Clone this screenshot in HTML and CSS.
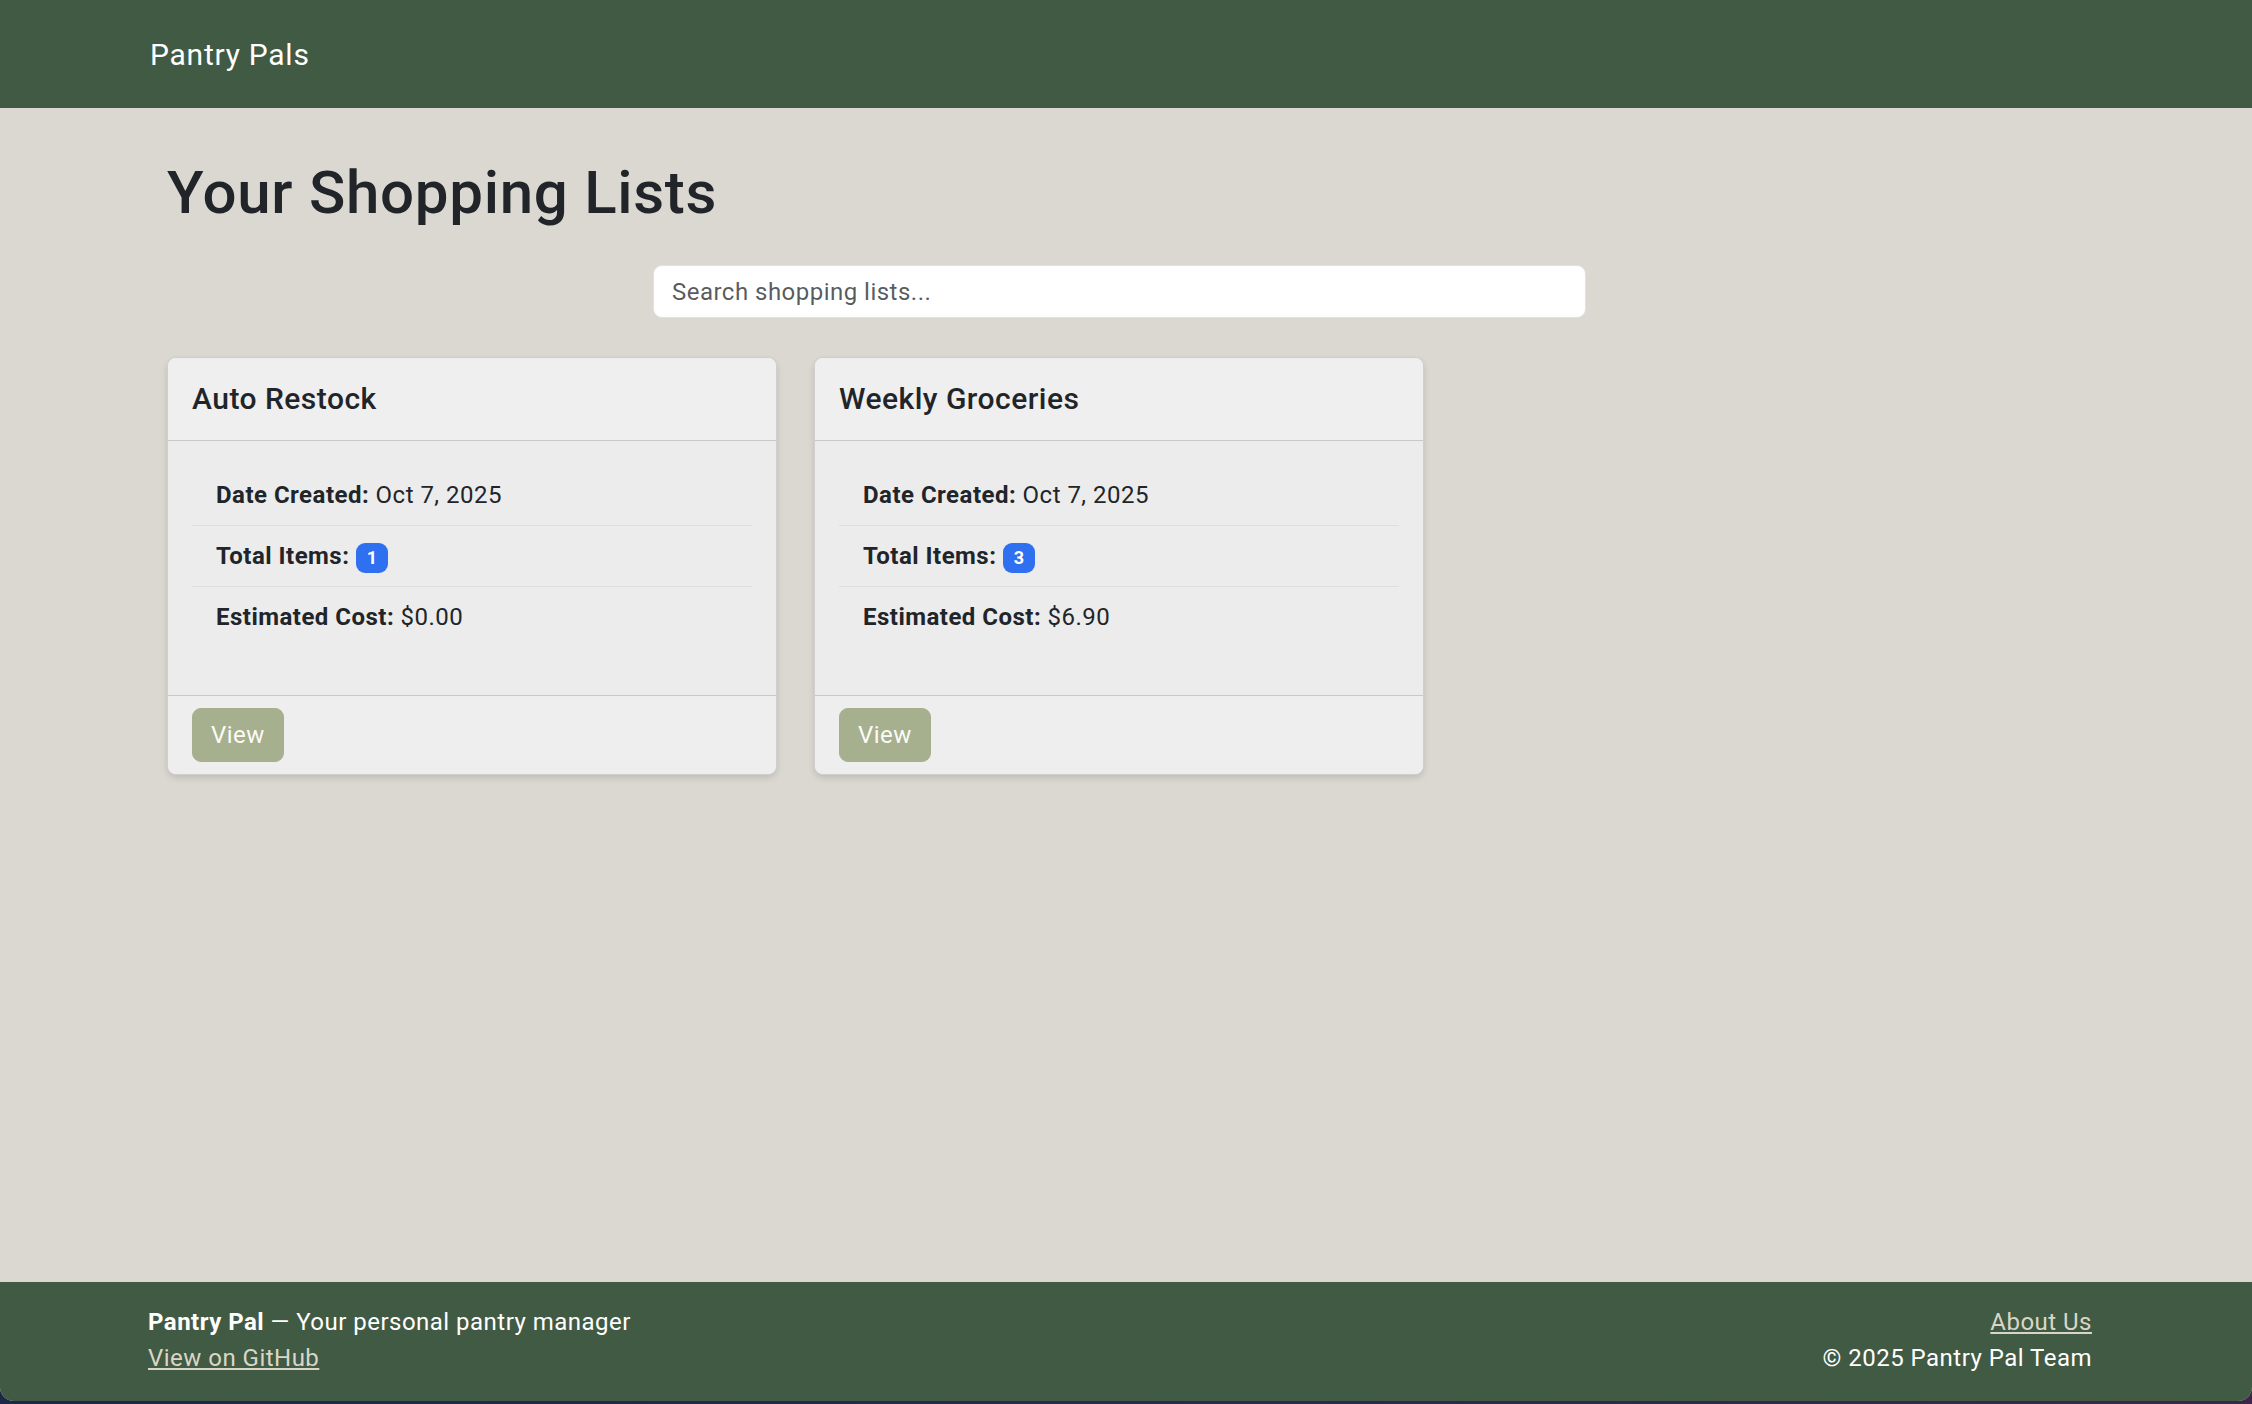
FILE: index.html
```html
<!DOCTYPE html>
<html lang="en">
<head>
<meta charset="utf-8">
<title>Pantry Pals</title>
<link rel="stylesheet" href="styles.css">
</head>
<body>
<div class="page">
  <nav class="navbar">
    <a class="brand" href="#">Pantry Pals</a>
  </nav>

  <main class="main">
    <h1 class="title">Your Shopping Lists</h1>
    <div class="search-row">
      <input class="search" type="text" placeholder="Search shopping lists...">
    </div>

    <div class="cards">
      <div class="card">
        <div class="card-header"><h5 class="card-title">Auto Restock</h5></div>
        <div class="card-body">
          <ul class="list">
            <li class="list-item"><strong>Date Created:</strong> Oct 7, 2025</li>
            <li class="list-item"><strong>Total Items:</strong> <span class="badge">1</span></li>
            <li class="list-item"><strong>Estimated Cost:</strong> $0.00</li>
          </ul>
        </div>
        <div class="card-footer"><a class="btn" href="#">View</a></div>
      </div>

      <div class="card">
        <div class="card-header"><h5 class="card-title">Weekly Groceries</h5></div>
        <div class="card-body">
          <ul class="list">
            <li class="list-item"><strong>Date Created:</strong> Oct 7, 2025</li>
            <li class="list-item"><strong>Total Items:</strong> <span class="badge">3</span></li>
            <li class="list-item"><strong>Estimated Cost:</strong> $6.90</li>
          </ul>
        </div>
        <div class="card-footer"><a class="btn" href="#">View</a></div>
      </div>
    </div>
  </main>

  <footer class="footer">
    <div class="footer-left">
      <div><strong>Pantry Pal</strong> — Your personal pantry manager</div>
      <div><a class="footer-link" href="#">View on GitHub</a></div>
    </div>
    <div class="footer-right">
      <div><a class="footer-link" href="#">About Us</a></div>
      <div>© 2025 Pantry Pal Team</div>
    </div>
  </footer>
</div>
</body>
</html>
```

FILE: styles.css
```css
html {
  margin: 0;
  background: linear-gradient(90deg, #1c2846 0%, #2a2a4c 60%, #3b2748 100%);
}

body {
  margin: 0;
  font-family: Roboto, "Noto Sans", "Liberation Sans", sans-serif;
  font-size: 24px;
  line-height: 36px;
  letter-spacing: 0.02em;
  color: #212529;
}

.page {
  min-height: 1401px;
  display: flex;
  flex-direction: column;
  background: #dad8d0;
  border-radius: 0 0 14px 14px;
  overflow: hidden;
}

.navbar {
  height: 108px;
  background: #415a43;
  display: flex;
  align-items: center;
  padding: 0 150px;
  box-sizing: border-box;
}

.brand {
  color: #ffffff;
  text-decoration: none;
  font-size: 30px;
  line-height: 45px;
  font-weight: 400;
  letter-spacing: 0.025em;
}

.main {
  flex: 1;
  padding: 49px 167px 40px 167px;
}

.title {
  margin: 0 0 36px 0;
  font-size: 60px;
  line-height: 72px;
  font-weight: 500;
  letter-spacing: 0.012em;
  color: #212529;
}

.search-row {
  margin-left: 486px;
  width: 933px;
}

.search {
  display: block;
  width: 100%;
  height: 53px;
  box-sizing: border-box;
  padding: 0 18px;
  border: 1px solid #dee2e6;
  border-radius: 9px;
  background: #ffffff;
  font-family: inherit;
  font-size: 24px;
  letter-spacing: 0.02em;
  color: #212529;
  outline: none;
}

.search::placeholder {
  color: rgba(33, 37, 41, 0.75);
}

.cards {
  margin-top: 39px;
  display: grid;
  grid-template-columns: repeat(3, 610px);
  column-gap: 37px;
  align-items: start;
}

.card {
  background: #ececec;
  border: 1px solid rgba(0, 0, 0, 0.12);
  border-radius: 9px;
  box-shadow: 0 3px 6px rgba(0, 0, 0, 0.12);
  overflow: hidden;
}

.card-header {
  background: #efefef;
  padding: 23px 24px;
  border-bottom: 1px solid #c9c9c9;
}

.card-title {
  margin: 0;
  font-size: 30px;
  line-height: 36px;
  font-weight: 500;
}

.card-body {
  padding: 24px;
}

.list {
  list-style: none;
  margin: 0 0 24px 0;
  padding: 0;
}

.list-item {
  padding: 12px 24px;
  border-bottom: 1px solid #dddee1;
}

.list-item:last-child {
  border-bottom: none;
}

.list-item strong {
  font-weight: 700;
}

.badge {
  display: inline-block;
  font-size: 18px;
  line-height: 1;
  font-weight: 700;
  letter-spacing: 0;
  color: #ffffff;
  background: #2e70f0;
  padding: 6px 11px;
  border-radius: 9px;
  vertical-align: baseline;
}

.card-footer {
  background: #eeeeee;
  border-top: 1px solid #c9c9c9;
  padding: 12px 24px;
}

.btn {
  display: inline-block;
  padding: 8px 18px;
  line-height: 36px;
  font-size: 24px;
  color: #fbfbf6;
  background: #a6af8e;
  border: 1px solid #a6af8e;
  border-radius: 9px;
  text-decoration: none;
}

.footer {
  background: #415a43;
  color: #ffffff;
  display: flex;
  justify-content: space-between;
  padding: 22px 160px 25px 148px;
}

.footer-left strong {
  font-weight: 700;
}

.footer-right {
  text-align: right;
}

.footer-link {
  color: #d9d6c8;
  text-decoration: underline;
}
```
